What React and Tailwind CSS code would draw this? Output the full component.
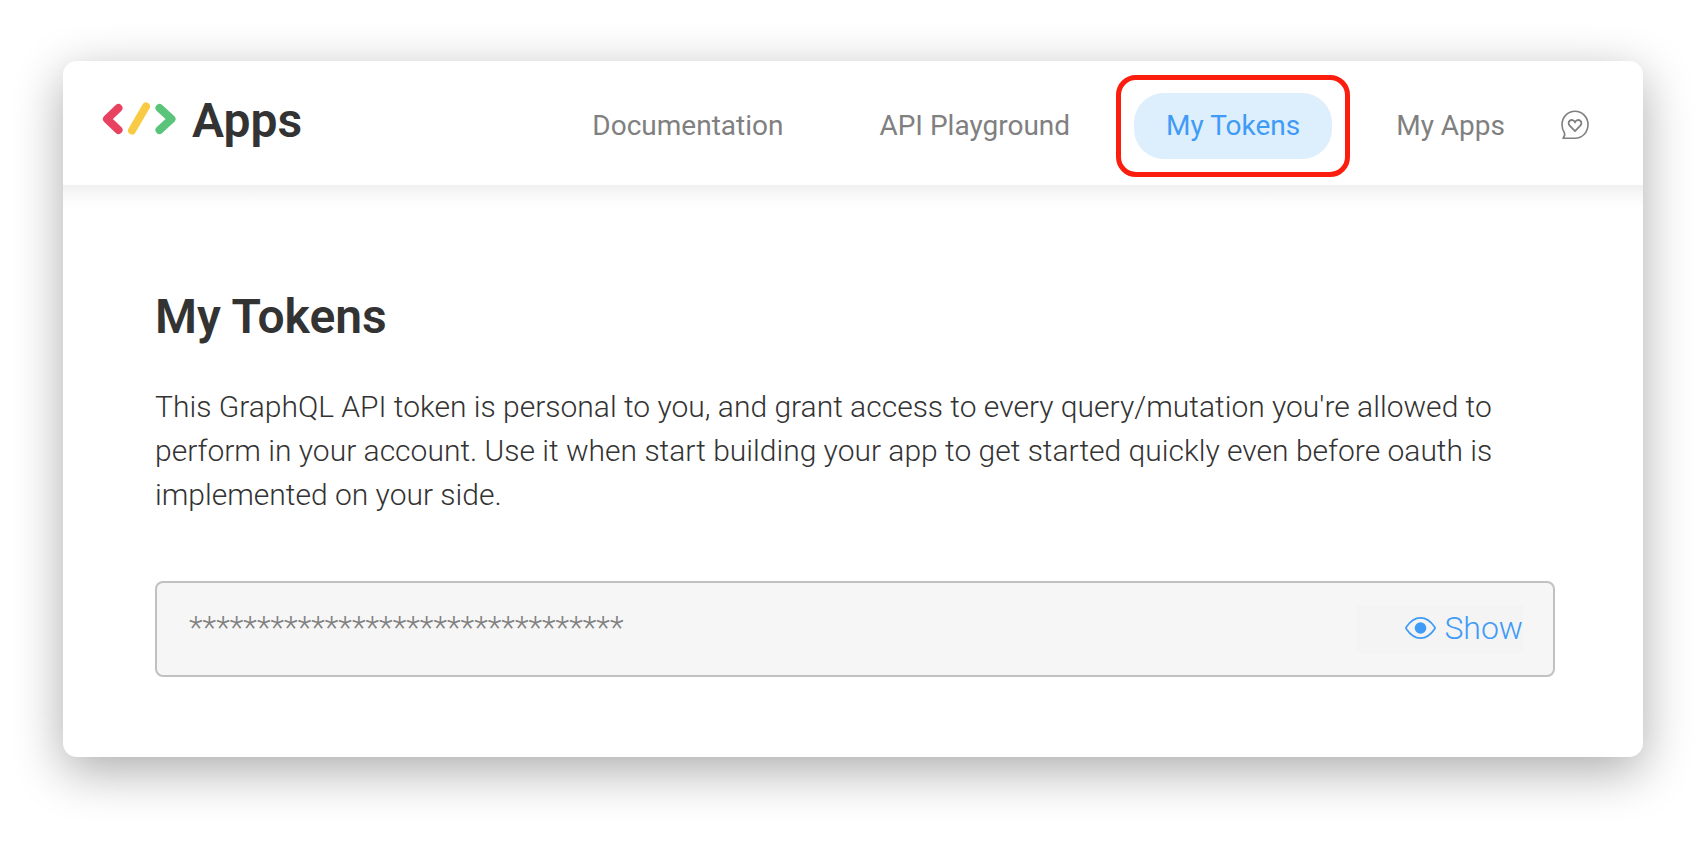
import React, { useState } from 'react';

const TOKEN_MASK = '*'.repeat(32);

function Logo() {
  return (
    <svg className="mb-1" width="74" height="34" viewBox="0 0 74 34" fill="none" strokeWidth="8" strokeLinecap="round" strokeLinejoin="round" aria-hidden="true">
      <path d="M16.5 6 L5 17 L16.5 28" stroke="#E94160" />
      <path d="M44 4.5 L30 28.5" stroke="#F9CB45" />
      <path d="M57.5 6 L69.5 17 L57.5 28" stroke="#5AC57A" />
    </svg>
  );
}

function FeedbackIcon() {
  return (
    <svg width="28" height="30" viewBox="0 0 28 30" fill="none" stroke="#808080" strokeLinecap="round" strokeLinejoin="round" aria-hidden="true">
      <path d="M2 28.3 C3.6 26.6 4.2 25 3.4 22.8 C1.8 20.4 1 17.8 1 14.8 C1 7.2 6.8 1.2 14 1.2 C21.2 1.2 27 7.2 27 14.6 C27 22.2 21.4 28.3 14 28.3 Z" strokeWidth="1.6" />
      <path d="M14 21.2 L8.7 15.6 C7.2 14 7.3 12 8.7 10.8 C10.4 9.4 13 9.8 14 12.4 C15 9.8 17.6 9.4 19.3 10.8 C20.7 12 20.8 14 19.3 15.6 Z" strokeWidth="1.8" />
    </svg>
  );
}

function EyeIcon() {
  return (
    <svg width="31" height="24" viewBox="0 0 32 24" fill="none" aria-hidden="true">
      <path d="M1.4 13 Q0.6 12 1.4 11 C5.6 4.8 10.4 1.6 16 1.6 C21.6 1.6 26.4 4.8 30.6 11 Q31.4 12 30.6 13 C26.4 19.2 21.6 22.4 16 22.4 C10.4 22.4 5.6 19.2 1.4 13 Z" stroke="#409BF7" strokeWidth="1.8" />
      <circle cx="16" cy="12" r="6" fill="#409BF7" />
    </svg>
  );
}

export default function App() {
  const [visible, setVisible] = useState(false);

  return (
    <div className="min-h-screen bg-white pt-[61px] pr-[65px] pb-[92px] pl-[63px] font-['Roboto',sans-serif] text-[#333333]">
      <div className="rounded-[14px] bg-white pb-20 shadow-[0_14px_50px_rgba(0,0,0,0.33)]">
        <header className="flex h-[124px] items-center justify-between pr-[54px] pl-[39px]">
          <a href="#home" className="flex items-center gap-4 pb-1">
            <Logo />
            <span className="text-[48px] leading-[56px] font-semibold">Apps</span>
          </a>

          <nav className="flex items-center pt-1.5 text-[28px] leading-[34px] text-[#808080]">
            <a href="#docs" className="mr-24">Documentation</a>
            <a href="#playground" className="mr-16">API Playground</a>
            <a href="#tokens" aria-current="page" className="relative mr-16 rounded-[30px] bg-[#DDEEFD] px-8 py-4 text-[#409BF7]">
              My Tokens
              <span className="pointer-events-none absolute -inset-[18px] rounded-[20px] border-[5px] border-[#FB1D0E]" />
            </a>
            <a href="#apps" className="mr-14">My Apps</a>
            <button type="button" aria-label="Feedback" className="pb-0.5">
              <FeedbackIcon />
            </button>
          </nav>
        </header>

        {/* shade cast by the header */}
        <div className="h-6 bg-linear-to-b from-[#F0F0F0] via-[#FAFAFA] to-white" />

        <main className="pt-20 pr-[88px] pl-[92px]">
          <h1 className="text-[48px] leading-[56px] font-semibold">My Tokens</h1>
          <p className="mt-10 text-[30px] leading-[44px] font-light">
            This GraphQL API token is personal to you, and grant access to every query/mutation you're allowed to
            perform in your account. Use it when start building your app to get started quickly even before oauth is
            implemented on your side.
          </p>

          <div className="mt-16 flex h-24 items-center rounded-lg border-2 border-[#C1C1C1] bg-[#F6F6F6] pr-[30px] pl-8">
            <input
              type="text"
              readOnly
              aria-label="API token"
              value={TOKEN_MASK}
              className="min-w-0 flex-1 bg-transparent pb-1 text-[32px] leading-[48px] font-light text-[#808080] outline-none"
            />
            <button
              type="button"
              onClick={() => setVisible(!visible)}
              className="flex h-12 w-[166px] items-center justify-end gap-2 bg-[#F4F4F4] pb-0.5 text-[32px] font-light text-[#409BF7]"
            >
              <EyeIcon />
              {visible ? 'Hide' : 'Show'}
            </button>
          </div>
        </main>
      </div>
    </div>
  );
}
